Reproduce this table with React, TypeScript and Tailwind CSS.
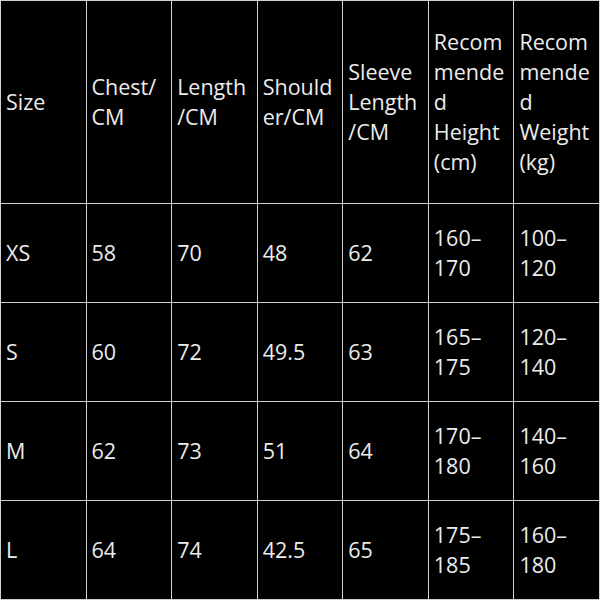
import React from "react";

const header: React.ReactNode[] = [
  "Size",
  <>Chest/<br />CM</>,
  <>Length<br />/CM</>,
  <>Should<br />er/CM</>,
  <>Sleeve<br />Length<br />/CM</>,
  <>Recom<br />mende<br />d<br />Height<br />(cm)</>,
  <>Recom<br />mende<br />d<br />Weight<br />(kg)</>,
];

const rows: string[][] = [
  ["XS", "58", "70", "48", "62", "160–170", "100–120"],
  ["S", "60", "72", "49.5", "63", "165–175", "120–140"],
  ["M", "62", "73", "51", "64", "170–180", "140–160"],
  ["L", "64", "74", "42.5", "65", "175–185", "160–180"],
];

function Cell({ children }: { children: React.ReactNode }) {
  return (
    <td className="border-[1.5px] border-[#d0d0d0] px-[5px] align-middle leading-[30px] whitespace-nowrap">
      {children}
    </td>
  );
}

function range(v: string) {
  if (!v.includes("–")) return v;
  const [a, b] = v.split("–");
  return (
    <>
      {a}–<br />
      {b}
    </>
  );
}

export default function App() {
  return (
    <div
      className="h-[600px] w-[600px] bg-black text-[21.5px] text-[#ececec]"
      style={{ fontFamily: '"Open Sans", "Noto Sans", sans-serif' }}
    >
      <table className="h-[600px] w-[600px] table-fixed border-collapse">
        <tbody>
          <tr className="h-[203px]">
            {header.map((h, i) => (
              <Cell key={i}>{h}</Cell>
            ))}
          </tr>
          {rows.map((r) => (
            <tr key={r[0]} className="h-[99px]">
              {r.map((v, i) => (
                <Cell key={i}>{range(v)}</Cell>
              ))}
            </tr>
          ))}
        </tbody>
      </table>
    </div>
  );
}
